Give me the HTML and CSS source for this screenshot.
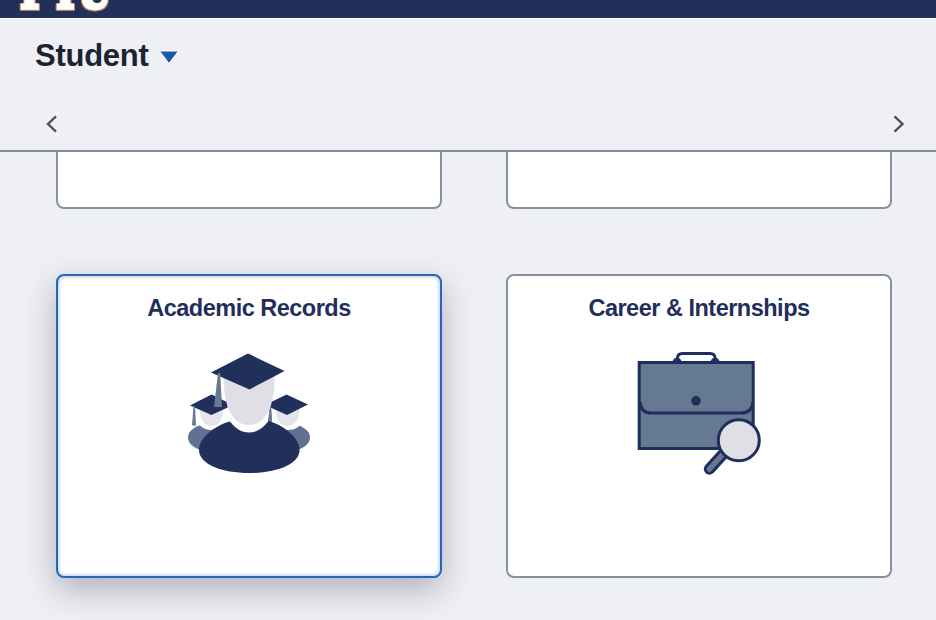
FILE: index.html
```html
<!DOCTYPE html>
<html lang="en">
<head>
<meta charset="utf-8">
<title>Student</title>
<link rel="stylesheet" href="styles.css">
</head>
<body>
<header class="brand">
  <svg class="logo" width="120" height="18" viewBox="0 0 120 18" role="img">
    <text class="logo-text" transform="scale(1 1.2)" x="20.500 56.500 78" y="6.500">FIU</text>
  </svg>
</header>
<section class="toolbar">
  <button class="page-menu"><span class="page-name">Student</span>
    <svg class="caret" width="22" height="16" viewBox="0 0 22 16"><path d="M1.500 2h19L11 14.500z" fill="#1c5aa9" stroke="#fff" stroke-width="1"/></svg>
  </button>
  <nav class="pager">
    <svg width="14" height="20" viewBox="0 0 14 20"><path d="M11 2.300 3 10l8 7.700"/></svg>
    <svg width="14" height="20" viewBox="0 0 14 20"><path d="m2.500 2.300 8 7.700-8 7.700"/></svg>
  </nav>
</section>
<main class="tiles">
  <article class="tile tail"></article>
  <article class="tile tail"></article>
  <article class="tile selected">
    <h2>Academic Records</h2>
    <svg class="art" width="140" height="145" viewBox="0 0 140 145">
      <g fill="#5f7291">
        <ellipse cx="29" cy="97.500" rx="21" ry="13.500"/>
        <ellipse cx="109" cy="97.500" rx="21" ry="13.500"/>
      </g>
      <path d="M16 70h31v9c-2 8-8 11-15.500 11S18 86 16 78zM92 70h31v9c-2 8-8 11-15.500 11S94 86 92 78z" fill="#fff"/>
      <path d="M20 68h23v5c-1 9-6 13-11.500 13S21 82 20 73zM96 68h23v5c-1 9-6 13-11.500 13S97 82 96 73z" fill="#e5e4ea"/>
      <path d="m10 65.500 21.500-11L53 65l-21.500 10zM85 65l21.500-10.500L128 64.500 107 75z" fill="#21305b"/>
      <path d="M13.500 66h1.500l1 19.500h-4zM90 66h1l1 18h-4z" fill="#667993"/>
      <path d="M46.500 40h44v18c-1 20-8 34-21.500 34S48 78 46.500 58z" fill="#fff"/>
      <path d="M90 66h1l1 15h-4z" fill="#667993"/>
      <path d="M50 81.500C55 88 61 92.500 69 92.500S83 88 88.500 81c11 2.500 31 15 31 29 0 14-22 23-50 23s-50.500-9-50.500-23c0-14 20-26 31-28.500z" fill="#21305b"/>
      <path d="M44 35h50.500c1 20-4 50-25.500 50S43 55 44 35z" fill="#e0dfe5"/>
      <path d="M31 32.500 68 13.500 104.500 31 69.500 49.500z" fill="#21305b"/>
      <path d="M38 33h2.200L42 67h-8z" fill="#667993"/>
    </svg>
  </article>
  <article class="tile">
    <h2>Career &amp; Internships</h2>
    <svg class="art" width="150" height="145" viewBox="0 0 150 145" fill="none" stroke="#1f2e5b" stroke-width="3">
      <path d="M52.500 21v-3q0-4.500 5-4.500H85q5 0 5 4.500v3"/>
      <path d="M14.200 22.500h114v86h-114z" fill="#667993"/>
      <path d="M15 62q1 11 11 11h90q11 0 12-11"/>
      <path d="M47.500 23q1-5 4.500-5t5 5zM85.500 23q1-5 4.500-5t5 5z" fill="#1f2e5b" stroke-width="1"/>
      <circle cx="71" cy="60.800" r="4.800" fill="#1f2e5b" stroke="none"/>
      <path d="m99 113-14.500 16" stroke-width="11.500" stroke-linecap="round"/>
      <path d="m99 113-14.500 16" stroke="#667993" stroke-width="5.500" stroke-linecap="round"/>
      <circle cx="113.800" cy="100.200" r="20.500" fill="#e0dfe5"/>
    </svg>
  </article>
</main>
</body>
</html>
```
FILE: styles.css
```css
* { box-sizing: border-box; }
body {
  margin: 0;
  height: 620px;
  overflow: hidden;
  display: flex;
  flex-direction: column;
  background: #eff0f5;
  font-family: "Liberation Sans", Arial, sans-serif;
}
.brand {
  flex: none;
  height: 19px;
  background: #21305b;
  border-bottom: 1px solid #fafbfd;
}
.logo {
  display: block;
  overflow: hidden;
  filter: drop-shadow(1px 0 0 #ae8846) drop-shadow(-1px 0 0 #ae8846) drop-shadow(0 1px 0 #ae8846);
}
.logo-text {
  font: bold 38px "DejaVu Serif", serif;
  fill: #fff;
  stroke: #fff;
  stroke-width: 3px;
}
.toolbar {
  flex: none;
  height: 133px;
  padding: 17px 30px 0 35px;
  border-bottom: 2px solid #838c95;
}
.page-menu {
  display: flex;
  align-items: center;
  gap: 9px;
  height: 40px;
  padding: 0;
  border: 0;
  background: none;
  font: bold 31px "Liberation Sans", Arial, sans-serif;
  letter-spacing: -.25px;
  color: #1c2433;
}
.caret { margin-top: 1px; }
.pager {
  display: flex;
  justify-content: space-between;
  padding: 38px 0 0 10px;
  fill: none;
  stroke: #505256;
  stroke-width: 2.4;
}
.tiles {
  display: grid;
  grid-template-columns: 386px 386px;
  grid-template-rows: 57px 304px;
  gap: 65px 64px;
  padding-left: 56px;
}
.tile {
  background: #fff;
  border: 2px solid #87919a;
  border-radius: 8px;
  display: flex;
  flex-direction: column;
  align-items: center;
}
.tail { border-top: 0; border-radius: 0 0 8px 8px; }
.selected {
  border-color: #2667b9;
  box-shadow: 0 12px 32px rgba(40, 48, 62, .32), inset 0 0 4px #8db3e2;
}
.tile h2 {
  margin: 17px 0 0;
  font-size: 23.5px;
  line-height: 30px;
  letter-spacing: -.5px;
  color: #1f2e5b;
}
.art { margin: 17px 0 0 2px; }
```
